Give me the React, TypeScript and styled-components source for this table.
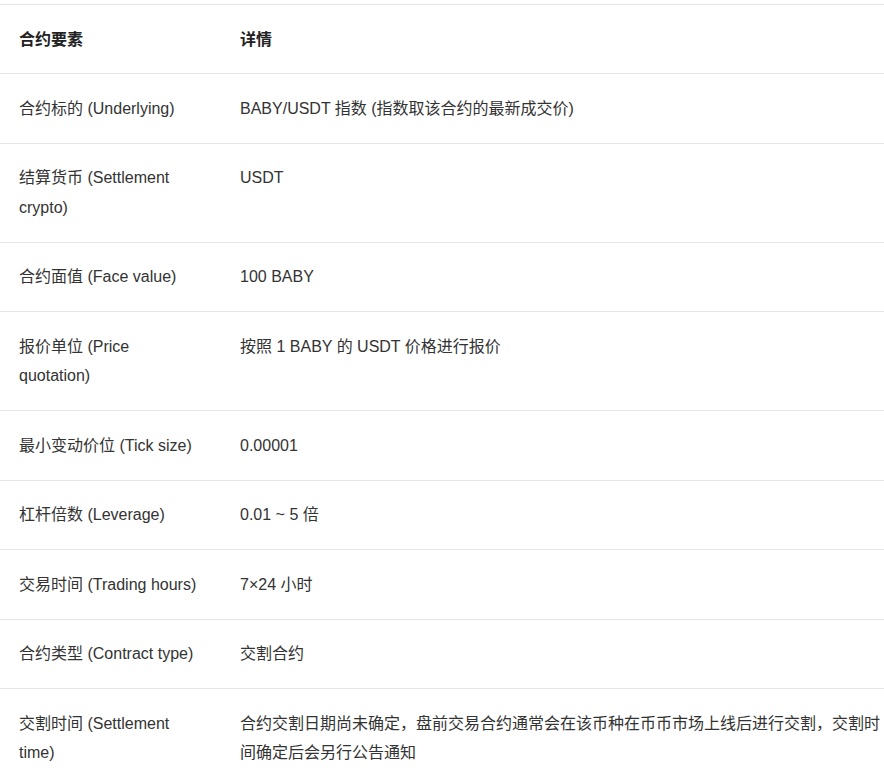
import React from 'react';
import styled, { createGlobalStyle } from 'styled-components';

const GlobalStyle = createGlobalStyle`
  html, body {
    margin: 0;
    padding: 0;
    background: #fff;
    overflow: hidden;
  }
  body {
    font-family: "Liberation Sans", Arial, "Noto Sans CJK SC", sans-serif;
    color: #333;
  }
`;

const Page = styled.div`
  width: 884px;
  padding-top: 4px;
`;

const Table = styled.table`
  width: 100%;
  table-layout: fixed;
  border-collapse: collapse;
  font-size: 16px;
  line-height: 29.5px;

  th, td {
    box-sizing: border-box;
  }
`;

const KeyCol = styled.col`
  width: 239px;
`;

const Row = styled.tr`
  border-top: 1px solid #e6e6e6;
`;

const HeadCell = styled.th<{ $first?: boolean }>`
  padding: 19.5px ${(p) => (p.$first ? '38px' : '0')} 19px ${(p) => (p.$first ? '19px' : '1px')};
  text-align: left;
  font-weight: 700;
  color: #222;
  vertical-align: top;
`;

const Cell = styled.td<{ $first?: boolean }>`
  padding: 19.5px ${(p) => (p.$first ? '38px' : '0')} 19.5px ${(p) => (p.$first ? '19px' : '1px')};
  vertical-align: top;
  color: #333;
`;

const rows: [string, string][] = [
  ['合约标的 (Underlying)', 'BABY/USDT 指数 (指数取该合约的最新成交价)'],
  ['结算货币 (Settlement crypto)', 'USDT'],
  ['合约面值 (Face value)', '100 BABY'],
  ['报价单位 (Price quotation)', '按照 1 BABY 的 USDT 价格进行报价'],
  ['最小变动价位 (Tick size)', '0.00001'],
  ['杠杆倍数 (Leverage)', '0.01 ~ 5 倍'],
  ['交易时间 (Trading hours)', '7×24 小时'],
  ['合约类型 (Contract type)', '交割合约'],
  [
    '交割时间 (Settlement time)',
    '合约交割日期尚未确定，盘前交易合约通常会在该币种在币币市场上线后进行交割，交割时间确定后会另行公告通知',
  ],
];

export default function App() {
  return (
    <Page>
      <GlobalStyle />
      <Table>
        <colgroup>
          <KeyCol />
          <col />
        </colgroup>
        <thead>
          <Row>
            <HeadCell $first>合约要素</HeadCell>
            <HeadCell>详情</HeadCell>
          </Row>
        </thead>
        <tbody>
          {rows.map(([k, v]) => (
            <Row key={k}>
              <Cell $first>{k}</Cell>
              <Cell>{v}</Cell>
            </Row>
          ))}
        </tbody>
      </Table>
    </Page>
  );
}
